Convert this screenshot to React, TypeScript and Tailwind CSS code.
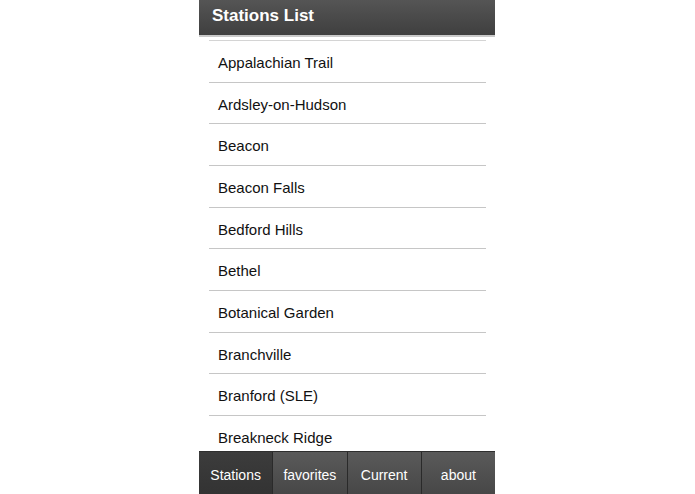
const stations = [
  'Appalachian Trail',
  'Ardsley-on-Hudson',
  'Beacon',
  'Beacon Falls',
  'Bedford Hills',
  'Bethel',
  'Botanical Garden',
  'Branchville',
  'Branford (SLE)',
  'Breakneck Ridge',
];

const tabs = ['Stations', 'favorites', 'Current', 'about'];

export default function App() {
  return (
    <div className="flex h-[494px] w-full bg-white font-['Liberation_Sans',Arial,sans-serif]">
      <div className="ml-[199px] flex h-full w-[296px] flex-col">
        {/* Header */}
        <div className="flex h-[37px] shrink-0 items-start border-b-2 border-[#c9c9c9] bg-gradient-to-b from-[#555555] to-[#3f3f3f] px-[13px] pt-[6px]">
          <h1 className="text-[17px] font-bold leading-[20px] text-white">Stations List</h1>
        </div>

        {/* List */}
        <div className="flex-1 overflow-hidden pt-[3px]">
          <div className="mx-[10px] mr-[9px] border-t border-[#d4d4d4]" />
          {stations.map((s) => (
            <div
              key={s}
              className="mx-[10px] mr-[9px] flex h-[41.67px] items-center border-b border-[#c6c6c6] pl-[9px] pt-[4px] text-[15px] text-[#111]"
            >
              {s}
            </div>
          ))}
        </div>

        {/* Tab bar */}
        <div className="flex h-[43px] shrink-0 border-t border-[#2e2e2e]">
          {tabs.map((t, i) => (
            <div
              key={t}
              className={`flex flex-1 items-center justify-center pt-[4px] text-[14px] text-white ${
                i === 0
                  ? 'bg-gradient-to-b from-[#3c3c3c] to-[#333333]'
                  : 'border-l border-[#2a2a2a] bg-gradient-to-b from-[#5a5a5a] to-[#474747]'
              }`}
            >
              {t}
            </div>
          ))}
        </div>
      </div>
    </div>
  );
}
